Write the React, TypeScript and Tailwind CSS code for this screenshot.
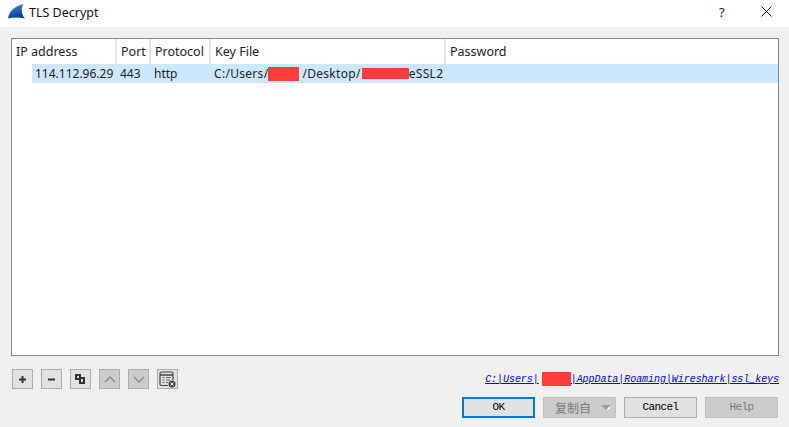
import React from "react";

const sans = { fontFamily: '"Noto Sans", "Noto Sans CJK SC", sans-serif' };

function ToolBtn({ off, children }: { off?: boolean; children: React.ReactNode }) {
  return (
    <div className={`w-[21px] h-[20px] border border-[#adadad] flex items-center justify-center ${off ? "bg-[#cccccc]" : "bg-[#e1e1e1]"}`}>
      {children}
    </div>
  );
}

function DlgBtn({ label, off, primary, menu }: { label: string; off?: boolean; primary?: boolean; menu?: boolean }) {
  return (
    <div
      className={`w-[73px] h-[21px] flex items-center justify-center text-[11px] tracking-[-0.6px] font-['Liberation_Mono','Noto_Sans_CJK_SC',monospace] ${
        primary ? "border-2 border-[#0078d7] bg-[#e1e1e1] text-black" : off ? "border border-[#bfbfbf] bg-[#cccccc] text-[#7a7a7a]" : "border border-[#adadad] bg-[#e1e1e1] text-black"
      }`}
    >
      {menu ? (
        <div className="w-full flex items-center pl-[11px] pr-[4px] justify-between">
          <span className="text-[12px] tracking-normal font-['Noto_Sans_CJK_SC',sans-serif]">{label}</span>
          <svg width="10" height="6" viewBox="0 0 10 6"><path d="M0 0h10L5 5z" fill="#9a9a9a" /><path d="M9 1L5 5l4-1z" fill="#fff" /></svg>
        </div>
      ) : label}
    </div>
  );
}

function Head({ w, label, last }: { w?: string; label: string; last?: boolean }) {
  return (
    <div className={`${w ?? "flex-1"} pl-[4px] pt-[1px] flex items-center ${last ? "" : "border-r-2 border-[#e6e6e6]"}`}>{label}</div>
  );
}

export default function App() {
  return (
    <div className="w-[789px] h-[427px] bg-[#f0f0f0] flex flex-col overflow-hidden text-[#333]" style={sans}>
      <div className="h-[27px] bg-white flex items-center shrink-0 relative">
        <svg className="ml-[8px] mt-[-4px]" width="17" height="15" viewBox="0 0 17 15">
          <defs>
            <linearGradient id="fin" x1="0" y1="0" x2="0.3" y2="1">
              <stop offset="0" stopColor="#4a8ce0" />
              <stop offset="1" stopColor="#0c3a96" />
            </linearGradient>
          </defs>
          <path d="M0 14.500C1 8 6 2 15.500 0C13 4 13 10 17 14.500C11 13 5 13 0 14.500z" fill="url(#fin)" />
        </svg>
        <span className="ml-[4px] text-[12.5px] text-[#111]">TLS Decrypt</span>
        <span className="absolute left-[719px] top-[3px] text-[13px] text-[#222]">?</span>
        <svg className="absolute left-[761px] top-[6px]" width="11" height="11" viewBox="0 0 11 11">
          <path d="M0.500 0.500l10 10M10.500 0.500l-10 10" stroke="#222" strokeWidth="1" fill="none" />
        </svg>
      </div>

      <div className="mt-[11px] ml-[11px] w-[768px] h-[318px] bg-white border border-[#828790] shrink-0 text-[12px] flex flex-col">
        <div className="h-[25px] flex shrink-0 text-[#222] bg-white text-[12.5px]">
          <Head w="w-[105px]" label="IP address" />
          <Head w="w-[34px]" label="Port" />
          <Head w="w-[60px]" label="Protocol" />
          <Head w="w-[235px]" label="Key File" />
          <Head label="Password" last />
        </div>
        <div className="h-[19px] ml-[20px] bg-[#cce8ff] flex items-center text-[#222] whitespace-nowrap">
          <div className="w-[85px] pl-[3px]">114.112.96.29</div>
          <div className="w-[34px] pl-[3px]">443</div>
          <div className="w-[60px] pl-[3px]">http</div>
          <div className="pl-[3px] flex items-center tracking-[0.3px]">
            C:/Users/<span className="w-[31px] h-[14px] bg-[#ff3b3b] mr-[3px]" />/Desktop/<span className="w-[47px] h-[11px] bg-[#ff3b3b] ml-[1px]" />eSSL2
          </div>
        </div>
      </div>

      <div className="mt-[13px] ml-[12px] mr-[10px] flex items-center justify-between shrink-0 h-[20px]">
        <div className="flex gap-[8px]">
          <ToolBtn>
            <svg width="9" height="9" viewBox="0 0 9 9"><path d="M4.500 1v7M1 4.500h7" stroke="#333" strokeWidth="2" /></svg>
          </ToolBtn>
          <ToolBtn>
            <svg width="9" height="9" viewBox="0 0 9 9"><path d="M1 4.500h7" stroke="#333" strokeWidth="2" /></svg>
          </ToolBtn>
          <ToolBtn>
            <svg width="11" height="11" viewBox="0 0 11 11"><path d="M1 1h4v4H1zM5 4h4v5H5z" fill="none" stroke="#333" strokeWidth="2" /></svg>
          </ToolBtn>
          <ToolBtn off>
            <svg width="12" height="7" viewBox="0 0 12 7"><path d="M1 6l5-5 5 5" fill="none" stroke="#8a8a8a" strokeWidth="1.400" /></svg>
          </ToolBtn>
          <ToolBtn off>
            <svg width="12" height="7" viewBox="0 0 12 7"><path d="M1 1l5 5 5-5" fill="none" stroke="#8a8a8a" strokeWidth="1.400" /></svg>
          </ToolBtn>
          <ToolBtn>
            <svg width="17" height="17" viewBox="0 0 17 17">
              <path d="M1 13V2.500Q1 1 2.500 1h10Q14 1 14 2.500V9M1 13q0 1.500 1.500 1.500H9" fill="none" stroke="#444" strokeWidth="1.200" />
              <path d="M1 4h13" stroke="#444" strokeWidth="1.500" />
              <path d="M3.500 6.500h2M7 6.500h5M3.500 9h2M7 9h4M3.500 11.500h2M7 11.500h2" stroke="#666" strokeWidth="1" />
              <circle cx="13" cy="13" r="3.500" fill="#444" />
              <path d="M11.500 11.500l3 3M14.500 11.500l-3 3" stroke="#fff" strokeWidth="1" />
            </svg>
          </ToolBtn>
        </div>
        <div className="flex items-center italic text-[10px] tracking-[-0.05px] text-[#0000ee] underline whitespace-nowrap font-['Liberation_Mono',monospace]">
          C:|Users|<span className="w-[29px] h-[14px] bg-[#ff3b3b] ml-[3px]" />|AppData|Roaming|Wireshark|ssl_keys
        </div>
      </div>

      <div className="mt-[8px] ml-[462px] flex gap-[8px] shrink-0">
        <DlgBtn label="OK" primary />
        <DlgBtn label="复制自" off menu />
        <DlgBtn label="Cancel" />
        <DlgBtn label="Help" off />
      </div>
    </div>
  );
}
